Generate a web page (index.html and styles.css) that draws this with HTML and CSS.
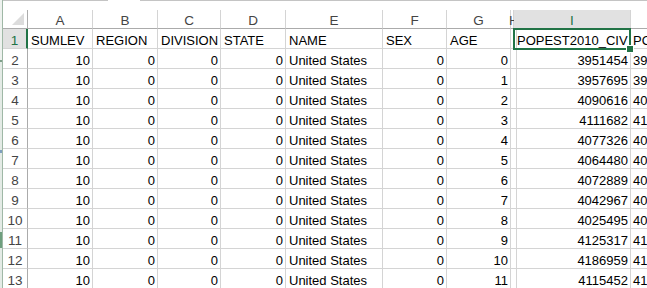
FILE: index.html
```html
<!DOCTYPE html>
<html>
<head>
<meta charset="utf-8">
<link rel="stylesheet" href="styles.css">
</head>
<body>
<div class="app">
  <div class="strip"></div>
  <div class="main">
    <div class="topbar"></div>
    <div class="sheet">
      <div class="ch corner"></div>
      <div class="ch">A</div>
      <div class="ch">B</div>
      <div class="ch">C</div>
      <div class="ch">D</div>
      <div class="ch">E</div>
      <div class="ch">F</div>
      <div class="ch">G</div>
      <div class="ch narrow">H</div>
      <div class="ch sel">I</div>
      <div class="ch last"></div>

      <div class="rh sel">1</div>
      <div class="c">SUMLEV</div>
      <div class="c">REGION</div>
      <div class="c">DIVISION</div>
      <div class="c">STATE</div>
      <div class="c">NAME</div>
      <div class="c">SEX</div>
      <div class="c">AGE</div>
      <div class="c narrow"></div>
      <div class="c active">POPEST2010_CIV</div>
      <div class="c last">POPESTIMATE2010</div>

      <div class="rh">2</div><div class="c n">10</div><div class="c n">0</div><div class="c n">0</div><div class="c n">0</div><div class="c">United States</div><div class="c n">0</div><div class="c n">0</div><div class="c narrow"></div><div class="c n">3951454</div><div class="c last">3944153</div>
      <div class="rh">3</div><div class="c n">10</div><div class="c n">0</div><div class="c n">0</div><div class="c n">0</div><div class="c">United States</div><div class="c n">0</div><div class="c n">1</div><div class="c narrow"></div><div class="c n">3957695</div><div class="c last">3978070</div>
      <div class="rh">4</div><div class="c n">10</div><div class="c n">0</div><div class="c n">0</div><div class="c n">0</div><div class="c">United States</div><div class="c n">0</div><div class="c n">2</div><div class="c narrow"></div><div class="c n">4090616</div><div class="c last">4096929</div>
      <div class="rh">5</div><div class="c n">10</div><div class="c n">0</div><div class="c n">0</div><div class="c n">0</div><div class="c">United States</div><div class="c n">0</div><div class="c n">3</div><div class="c narrow"></div><div class="c n">4111682</div><div class="c last">4119040</div>
      <div class="rh">6</div><div class="c n">10</div><div class="c n">0</div><div class="c n">0</div><div class="c n">0</div><div class="c">United States</div><div class="c n">0</div><div class="c n">4</div><div class="c narrow"></div><div class="c n">4077326</div><div class="c last">4063170</div>
      <div class="rh">7</div><div class="c n">10</div><div class="c n">0</div><div class="c n">0</div><div class="c n">0</div><div class="c">United States</div><div class="c n">0</div><div class="c n">5</div><div class="c narrow"></div><div class="c n">4064480</div><div class="c last">4056858</div>
      <div class="rh">8</div><div class="c n">10</div><div class="c n">0</div><div class="c n">0</div><div class="c n">0</div><div class="c">United States</div><div class="c n">0</div><div class="c n">6</div><div class="c narrow"></div><div class="c n">4072889</div><div class="c last">4066381</div>
      <div class="rh">9</div><div class="c n">10</div><div class="c n">0</div><div class="c n">0</div><div class="c n">0</div><div class="c">United States</div><div class="c n">0</div><div class="c n">7</div><div class="c narrow"></div><div class="c n">4042967</div><div class="c last">4030579</div>
      <div class="rh">10</div><div class="c n">10</div><div class="c n">0</div><div class="c n">0</div><div class="c n">0</div><div class="c">United States</div><div class="c n">0</div><div class="c n">8</div><div class="c narrow"></div><div class="c n">4025495</div><div class="c last">4046486</div>
      <div class="rh">11</div><div class="c n">10</div><div class="c n">0</div><div class="c n">0</div><div class="c n">0</div><div class="c">United States</div><div class="c n">0</div><div class="c n">9</div><div class="c narrow"></div><div class="c n">4125317</div><div class="c last">4148353</div>
      <div class="rh">12</div><div class="c n">10</div><div class="c n">0</div><div class="c n">0</div><div class="c n">0</div><div class="c">United States</div><div class="c n">0</div><div class="c n">10</div><div class="c narrow"></div><div class="c n">4186959</div><div class="c last">4172541</div>
      <div class="rh">13</div><div class="c n">10</div><div class="c n">0</div><div class="c n">0</div><div class="c n">0</div><div class="c">United States</div><div class="c n">0</div><div class="c n">11</div><div class="c narrow"></div><div class="c n">4115452</div><div class="c last">4114839</div>
    </div>
  </div>
</div>
</body>
</html>
```

FILE: styles.css
```css
* { box-sizing: border-box; }
html, body { margin: 0; padding: 0; background: #fff; }
body { width: 647px; height: 288px; overflow: hidden; font-family: "Liberation Sans", Arial, sans-serif; font-size: 13px; color: #000; }
.app { display: flex; height: 288px; }
.strip { width: 3px; flex: none; background: linear-gradient(to bottom, #eef2ef 0 60px, #7fa08a 60px 62px, #e4ebe6 62px 150px, #7f9fbe 150px 153px, #e4ebe6 153px 232px, #6f9f7e 232px 248px, #e4ebe6 248px); border-right: 1px solid #9fb8a6; }
.main { flex: 1; display: flex; flex-direction: column; min-width: 0; }
.topbar { height: 10px; flex: none; background: linear-gradient(to right, #c4c4c4 0 105px, #fff 105px 137px, #c4c4c4 137px) top / 100% 1px no-repeat; }
.sheet { display: grid; grid-template-columns: 25px 65px 65px 63px 65px 97px 64px 64px 3px 117px 16px; grid-template-rows: 19px; grid-auto-rows: 20px; }
.ch { border-right: 1px solid #d4d4d4; border-bottom: 1px solid #ababab; color: #444; text-align: center; line-height: 16px; padding-top: 3px; overflow: hidden; white-space: nowrap; font-size: 13.5px; }
.ch.corner { position: relative; border-right: 1px solid #ababab; }
.ch.corner::after { content: ""; position: absolute; right: 3px; bottom: 3px; width: 12px; height: 12px; background: #dcdcdc; clip-path: polygon(100% 0, 100% 100%, 0 100%); }
.ch.narrow { text-indent: -2px; overflow: visible; }
.ch.sel { background: #e1e1e1; color: #217346; }
.ch.last { border-right: none; }
.rh { border-right: 1px solid #ababab; border-bottom: 1px solid #d4d4d4; color: #444; text-align: center; line-height: 16px; padding-top: 4px; font-size: 13.5px; overflow: hidden; }
.rh.sel { background: #e1e1e1; color: #217346; border-right: 2px solid #217346; }
.c { border-right: 1px solid #d4d4d4; border-bottom: 1px solid #d4d4d4; padding: 4px 2px 0 3px; line-height: 15px; white-space: nowrap; overflow: hidden; }
.c.n { text-align: right; }
.c.last { border-right: none; overflow: hidden; text-align: left; padding-left: 2px; }
.c.active { position: relative; overflow: visible; z-index: 2; }
.c.active::before { content: ""; position: absolute; left: -1px; top: -1px; right: -1px; bottom: -2px; border: 2px solid #217346; }
.c.active::after { content: ""; position: absolute; right: -4px; bottom: -5px; width: 6px; height: 6px; background: #217346; border: 1px solid #fff; }
```
